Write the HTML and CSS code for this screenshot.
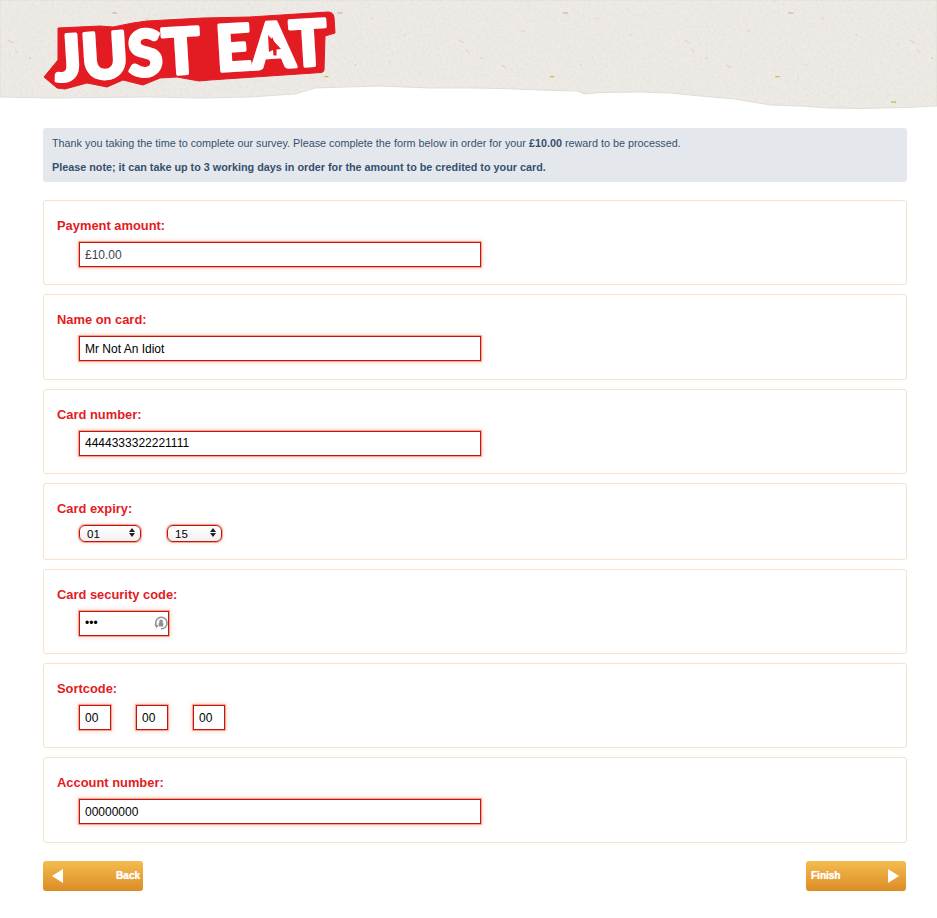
FILE: index.html
```html
<!DOCTYPE html>
<html lang="en">
<head>
<meta charset="utf-8">
<title>Just Eat survey reward</title>
<link rel="stylesheet" href="styles.css">
</head>
<body>
<header class="masthead">
  <svg class="masthead-art" viewBox="0 0 937 110" width="937" height="110" aria-label="Just Eat">
    <defs>
      <filter id="grain" x="0" y="0" width="100%" height="100%">
        <feTurbulence type="fractalNoise" baseFrequency="0.35" numOctaves="4" seed="4"/>
        <feColorMatrix type="matrix" values="0 0 0 0 0.68  0 0 0 0 0.63  0 0 0 0 0.56  0.45 0.45 0 0 -0.38"/>
      </filter>
      <pattern id="specks" width="225.500" height="110" patternUnits="userSpaceOnUse">
        <rect x="112" y="12.500" width="5" height="1" fill="#c9a0a8"/>
        <rect x="99" y="76" width="4" height="1.200" fill="#b9c22c"/>
        <path d="M8 40l5 3M15 49l3 4M50 65l5 3M145 20l3-3M70 30l4 2" stroke="#ddd2bc" stroke-width="1" fill="none"/>
        <circle cx="30" cy="58" r="0.800" fill="#c4bfb6"/>
        <circle cx="130" cy="65" r="0.700" fill="#c8c3ba"/>
        <circle cx="180" cy="35" r="0.700" fill="#cfcac2"/>
      </pattern>
      <clipPath id="torn"><path d="M0 0H937V106L905 107.500L860 108.500L830 108L800 106L770 105L735 99L700 96L670 93L640 92L600 92.500L585 94L577 91L540 90L500 88.500L470 88L430 88L380 86L345 87L315 88L295 94L250 97L200 98L150 97L100 97.500L50 98L0 97Z"/></clipPath>
    </defs>
    <path class="paper-edge" d="M0 0H937V106L905 107.500L860 108.500L830 108L800 106L770 105L735 99L700 96L670 93L640 92L600 92.500L585 94L577 91L540 90L500 88.500L470 88L430 88L380 86L345 87L315 88L295 94L250 97L200 98L150 97L100 97.500L50 98L0 97Z"/>
    <g clip-path="url(#torn)">
      <rect width="937" height="110" filter="url(#grain)"/>
      <rect width="937" height="110" fill="url(#specks)"/>
      <rect x="891" y="101.500" width="5" height="1.200" fill="#b9c22c"/>
    </g>
    <path class="logo-back" d="M58 28L100 26L113 27L133 23L147 21L203 18L250 17L328 12Q333 12 334 17L335 33L325 36L324 70Q324 72 321 72.500L210 80L199 81L177 77L160 78L143 85L123 80L107 87L87 83L65 89L57 88L44 77L58 60Z"/>
    <g transform="rotate(-3.500 190 50)">
      <text class="logo-text" x="54" y="73" textLength="146" lengthAdjust="spacingAndGlyphs">JUST</text>
      <text class="logo-text" x="216" y="73" textLength="111" lengthAdjust="spacingAndGlyphs">EAT</text>
    </g>
    <path class="logo-cursor" d="M268 35L281 49L276.500 49.500L276.500 55.500L273.500 55.500L273 50L269 52Z"/>
  </svg>
</header>

<main class="page">
  <section class="notice">
    <p>Thank you taking the time to complete our survey. Please complete the form below in order for your <strong>£10.00</strong> reward to be processed.</p>
    <p><strong>Please note; it can take up to 3 working days in order for the amount to be credited to your card.</strong></p>
  </section>

  <form class="form">
    <div class="card">
      <label class="card-label">Payment amount:</label>
      <div class="fields"><input class="input input-wide input-muted" type="text" value="£10.00"></div>
    </div>
    <div class="card">
      <label class="card-label">Name on card:</label>
      <div class="fields"><input class="input input-wide" type="text" value="Mr Not An Idiot"></div>
    </div>
    <div class="card">
      <label class="card-label">Card number:</label>
      <div class="fields"><input class="input input-wide" type="text" value="4444333322221111"></div>
    </div>
    <div class="card card-expiry">
      <label class="card-label">Card expiry:</label>
      <div class="fields fields-expiry">
        <span class="select select-month"><select><option>01</option></select></span>
        <span class="select select-year"><select><option>15</option></select></span>
      </div>
    </div>
    <div class="card">
      <label class="card-label">Card security code:</label>
      <div class="fields">
        <span class="secure">
          <input class="input input-code" type="password" value="123">
          <svg class="key-icon" viewBox="0 0 14 14" width="16" height="16" aria-hidden="true">
            <path d="M3 9.500A5 5 0 1 1 7 12" fill="none" stroke="#959595" stroke-width="1.400"/>
            <path d="M1.500 8.500L5 9L3 11.500Z" fill="#959595"/>
            <circle cx="7" cy="5.500" r="1.500" fill="#8c8c8c"/>
            <rect x="5" y="6.500" width="4" height="3.500" rx="0.500" fill="#8c8c8c"/>
          </svg>
        </span>
      </div>
    </div>
    <div class="card">
      <label class="card-label">Sortcode:</label>
      <div class="fields fields-sort">
        <input class="input input-sort" type="text" value="00">
        <input class="input input-sort" type="text" value="00">
        <input class="input input-sort" type="text" value="00">
      </div>
    </div>
    <div class="card">
      <label class="card-label">Account number:</label>
      <div class="fields"><input class="input input-wide" type="text" value="00000000"></div>
    </div>
  </form>

  <nav class="actions">
    <a class="button" href="#"><span class="arrow arrow-left"></span><span>Back</span></a>
    <a class="button" href="#"><span>Finish</span><span class="arrow arrow-right"></span></a>
  </nav>
</main>
</body>
</html>
```
FILE: styles.css
```css
* { box-sizing: border-box; }

html, body { background: #fff; }

body {
  margin: 0;
  font-family: "Liberation Sans", Arial, sans-serif;
}

.masthead { height: 110px; }
.masthead-art { display: block; }

.paper-edge { fill: #eeebe7; stroke: #e2ded8; stroke-width: 1; }

.logo-back { fill: #e31b23; stroke: #e31b23; stroke-width: 1; stroke-linejoin: round; }

.logo-text {
  font-family: "Lato", "Liberation Sans", sans-serif;
  font-weight: 900;
  font-size: 63px;
  fill: #fff;
  stroke: #fff;
  stroke-width: 3.500;
  stroke-linejoin: round;
}

.logo-cursor { fill: #e31b23; }

.page {
  width: 864px;
  margin-left: 43px;
  padding-top: 18px;
}

.notice {
  height: 54px;
  padding: 9px;
  background: #e4e8ec;
  border-radius: 3px;
  color: #34506f;
  font-size: 10.800px;
  line-height: 13px;
}

.notice p { margin: 0 0 11px; }
.notice strong { font-weight: 700; }

.form {
  display: flex;
  flex-direction: column;
  gap: 9px;
  margin-top: 18px;
}

.card {
  height: 85.300px;
  padding: 17px 13px 0;
  background: #fff;
  border: 1px solid #f6e2c9;
  border-radius: 3px;
}

.card-expiry { height: 77px; }

.card-label {
  display: block;
  height: 24px;
  color: #e31b23;
  font-size: 12.900px;
  font-weight: 700;
  line-height: 16px;
}

.fields {
  display: flex;
  margin-left: 22px;
}

.fields-expiry { gap: 26px; margin-top: -1px; }
.fields-sort { gap: 25px; }

.input {
  height: 25px;
  padding: 0 5px;
  background: #fff;
  border: 1px solid #c8120f;
  border-radius: 0;
  box-shadow: 0 0 0 1px rgba(200, 50, 15, 0.3), 0 0 4px 1px rgba(227, 100, 40, 0.35);
  outline: 0;
  color: #000;
  font-family: "Liberation Sans", Arial, sans-serif;
  font-size: 12px;
}

.input-wide { width: 402px; }
.input-muted { color: #3f444c; }
.input-code { width: 90px; padding-right: 20px; }
.input-sort { width: 32px; }

.secure {
  position: relative;
  display: block;
  width: 90px;
  height: 25px;
}

.key-icon {
  position: absolute;
  top: 4px;
  right: 0;
}

.select {
  position: relative;
  display: block;
  height: 17px;
}

.select-month { width: 62px; }
.select-year { width: 55px; }

.select select {
  width: 100%;
  height: 17px;
  padding: 0 0 0 7px;
  appearance: none;
  background: linear-gradient(#fff, #f1f1f1);
  border: 1px solid #c8120f;
  border-radius: 6px;
  box-shadow: 0 0 0 1px rgba(200, 50, 15, 0.3), 0 0 3px 1px rgba(227, 100, 40, 0.3);
  outline: 0;
  color: #000;
  font-family: "Liberation Sans", Arial, sans-serif;
  font-size: 11.500px;
  line-height: 14px;
}

.select::before,
.select::after {
  content: "";
  position: absolute;
  right: 6px;
  width: 0;
  height: 0;
  border-left: 3px solid transparent;
  border-right: 3px solid transparent;
  pointer-events: none;
}

.select::before { top: 4px; border-bottom: 4px solid #222; }
.select::after { top: 9px; border-top: 4px solid #222; }

.actions {
  display: flex;
  justify-content: space-between;
  width: 863px;
  margin-top: 18px;
  padding-bottom: 27px;
}

.button {
  display: flex;
  justify-content: space-between;
  align-items: center;
  width: 100px;
  height: 30px;
  padding: 0 7px 0 9px;
  background: linear-gradient(#f4bd50, #dc8b25);
  border-radius: 3px;
  color: #fff;
  font-size: 10px;
  font-weight: 700;
  text-decoration: none;
  text-shadow: 0 0 1px #fff;
}

.button:last-child { padding: 0 7px 0 5px; }
.button:first-child { padding-right: 3px; }

.arrow {
  width: 0;
  height: 0;
  border-top: 7px solid transparent;
  border-bottom: 7px solid transparent;
}

.arrow-left { border-right: 11px solid #fff; }
.arrow-right { border-left: 11px solid #fff; }
```
